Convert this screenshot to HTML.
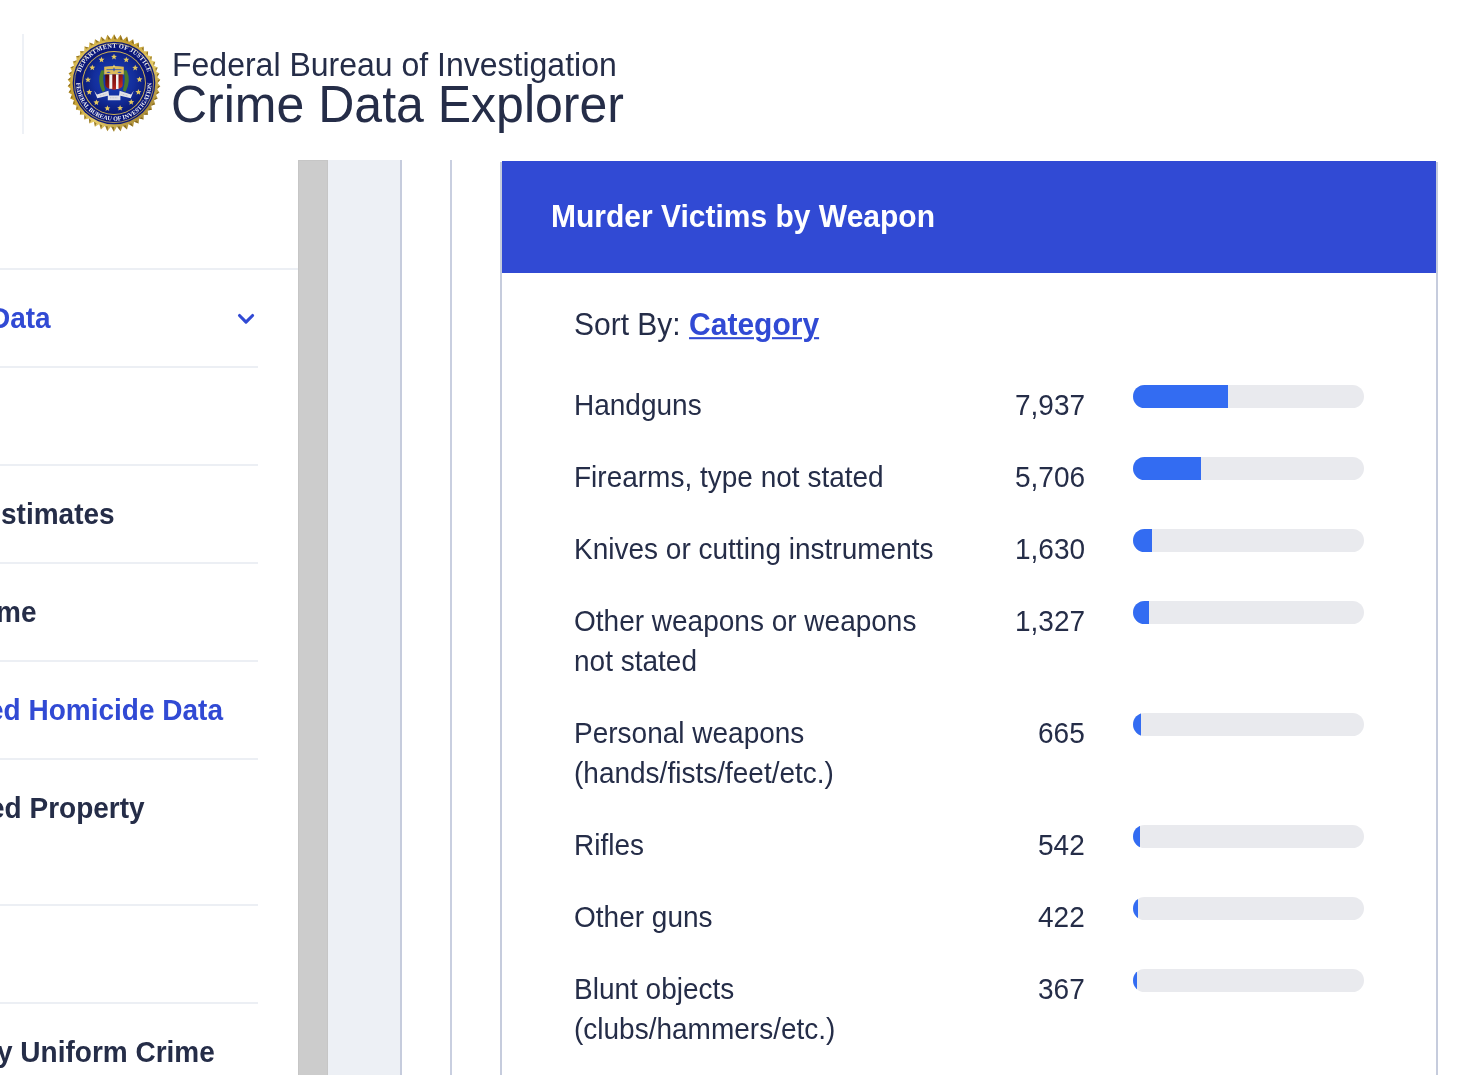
<!DOCTYPE html>
<html><head><meta charset="utf-8">
<style>
html,body{margin:0;padding:0;width:1483px;height:1075px;overflow:hidden;background:#fff;}
body{position:relative;font-family:"Liberation Sans",sans-serif;color:#252d48;}
.t,.lab,.num,.side,#seal{will-change:transform;}
.abs{position:absolute;}
.t{position:absolute;white-space:nowrap;line-height:40px;transform:scaleY(1.04);}
#vline0{left:22px;top:34px;width:2px;height:100px;background:#eef1f6;}
#seal{left:64px;top:33px;width:100px;height:100px;}
#fbi{left:172px;top:49px;font-size:32px;line-height:32px;transform-origin:0 27px;}
#cde{left:171px;top:80px;font-size:50px;line-height:50px;transform-origin:0 42px;}
/* sidebar */
.sl{position:absolute;left:0;height:2px;background:#eceff4;}
.side{position:absolute;font-weight:bold;font-size:28px;line-height:40px;white-space:nowrap;text-align:right;transform:scaleY(1.04);transform-origin:0 29px;}
#gray{left:298px;top:160px;width:28px;height:915px;background:#cccccc;border:1px solid #c6c6c6;border-bottom:none;}
#lightb{left:328px;top:160px;width:72px;height:915px;background:#edf0f5;}
#vl1{left:400px;top:160px;width:2px;height:915px;background:#c6ccdd;}
#vl2{left:450px;top:160px;width:2px;height:915px;background:#c9cfe0;}
#card{left:500px;top:162px;width:934px;height:940px;border-left:2px solid #c6ccdd;border-right:2px solid #c6ccdd;}
#chead{left:502px;top:161px;width:934px;height:112px;background:#314ad4;}
#ctitle{left:551px;top:197px;font-size:30px;font-weight:bold;color:#fff;line-height:40px;transform-origin:0 30px;}
.lab{position:absolute;left:574px;font-size:28px;line-height:40px;transform:scaleY(1.045);transform-origin:0 29px;}
.num{position:absolute;right:398px;font-size:28px;line-height:40px;text-align:right;transform:scaleY(1.045);transform-origin:0 29px;}
.trk{position:absolute;left:1133px;width:231px;height:23px;border-radius:12px;background:#e9eaee;overflow:hidden;}
.fill{position:absolute;left:0;top:0;height:23px;background:#336cf2;}
</style></head>
<body>
<div id="vline0" class="abs"></div>
<svg id="seal" class="abs" viewBox="0 0 100 100"><g transform="translate(2,2)">
<defs>
<linearGradient id="gold" x1="0" y1="0" x2="1" y2="1"><stop offset="0" stop-color="#f0da7c"/><stop offset="0.35" stop-color="#c09a2c"/><stop offset="0.6" stop-color="#e6cc6a"/><stop offset="1" stop-color="#86661a"/></linearGradient>
<radialGradient id="blu" cx="50%" cy="45%" r="55%"><stop offset="0" stop-color="#1c42bc"/><stop offset="0.6" stop-color="#132e9c"/><stop offset="1" stop-color="#0a1974"/></radialGradient>
<linearGradient id="red" x1="0" y1="0" x2="1" y2="1"><stop offset="0" stop-color="#4a0608"/><stop offset="0.6" stop-color="#9c1a18"/><stop offset="1" stop-color="#e03a22"/></linearGradient>
<path id="arcT" d="M 12.9 48 A 35.1 35.1 0 0 1 83.1 48"/>
<path id="arcB" d="M 10.4 48 A 37.6 37.6 0 0 0 85.6 48"/>
</defs>
<polygon points="45.02,4.50 48.00,-0.80 50.98,4.50 54.63,-0.22 56.87,5.31 61.03,1.48 62.60,6.92 67.06,4.13 68.06,9.29 72.59,7.56 73.14,12.38 77.61,11.60 77.76,16.14 82.09,16.16 81.82,20.48 85.98,21.19 85.25,25.35 89.22,26.64 87.99,30.63 91.72,32.46 89.98,36.24 93.43,38.56 91.19,42.06 94.29,44.83 91.60,48.00 94.29,51.17 91.19,53.94 93.43,57.44 89.98,59.76 91.72,63.54 87.99,65.37 89.22,69.36 85.25,70.65 85.98,74.81 81.82,75.52 82.09,79.84 77.76,79.86 77.61,84.40 73.14,83.62 72.59,88.44 68.06,86.71 67.06,91.87 62.60,89.08 61.03,94.52 56.87,90.69 54.63,96.22 50.98,91.50 48.00,96.80 45.02,91.50 41.37,96.22 39.13,90.69 34.97,94.52 33.40,89.08 28.94,91.87 27.94,86.71 23.41,88.44 22.86,83.62 18.39,84.40 18.24,79.86 13.91,79.84 14.18,75.52 10.02,74.81 10.75,70.65 6.78,69.36 8.01,65.37 4.28,63.54 6.02,59.76 2.57,57.44 4.81,53.94 1.71,51.17 4.40,48.00 1.71,44.83 4.81,42.06 2.57,38.56 6.02,36.24 4.28,32.46 8.01,30.63 6.78,26.64 10.75,25.35 10.02,21.19 14.18,20.48 13.91,16.16 18.24,16.14 18.39,11.60 22.86,12.38 23.41,7.56 27.94,9.29 28.94,4.13 33.40,6.92 34.97,1.48 39.13,5.31 41.37,-0.22" fill="url(#gold)"/>
<polygon points="48.00,-0.80 50.98,4.50 48.00,4.00" fill="#6a4c0a" opacity="0.6"/><polygon points="54.63,-0.22 56.87,5.31 53.99,4.41" fill="#6a4c0a" opacity="0.6"/><polygon points="61.03,1.48 62.60,6.92 59.87,5.63" fill="#6a4c0a" opacity="0.6"/><polygon points="67.06,4.13 68.06,9.29 65.53,7.64" fill="#6a4c0a" opacity="0.6"/><polygon points="72.59,7.56 73.14,12.38 70.86,10.41" fill="#6a4c0a" opacity="0.6"/><polygon points="77.61,11.60 77.76,16.14 75.77,13.87" fill="#6a4c0a" opacity="0.6"/><polygon points="82.09,16.16 81.82,20.48 80.16,17.97" fill="#6a4c0a" opacity="0.6"/><polygon points="85.98,21.19 85.25,25.35 83.95,22.63" fill="#6a4c0a" opacity="0.6"/><polygon points="89.22,26.64 87.99,30.63 87.07,27.76" fill="#6a4c0a" opacity="0.6"/><polygon points="91.72,32.46 89.98,36.24 89.46,33.27" fill="#6a4c0a" opacity="0.6"/><polygon points="93.43,38.56 91.19,42.06 91.08,39.05" fill="#6a4c0a" opacity="0.6"/><polygon points="94.29,44.83 91.60,48.00 91.90,45.00" fill="#6a4c0a" opacity="0.6"/><polygon points="94.29,51.17 91.19,53.94 91.90,51.00" fill="#6a4c0a" opacity="0.6"/><polygon points="93.43,57.44 89.98,59.76 91.08,56.95" fill="#6a4c0a" opacity="0.6"/><polygon points="91.72,63.54 87.99,65.37 89.46,62.73" fill="#6a4c0a" opacity="0.6"/><polygon points="89.22,69.36 85.25,70.65 87.07,68.24" fill="#6a4c0a" opacity="0.6"/><polygon points="85.98,74.81 81.82,75.52 83.95,73.37" fill="#6a4c0a" opacity="0.6"/><polygon points="82.09,79.84 77.76,79.86 80.16,78.03" fill="#6a4c0a" opacity="0.6"/><polygon points="77.61,84.40 73.14,83.62 75.77,82.13" fill="#6a4c0a" opacity="0.6"/><polygon points="72.59,88.44 68.06,86.71 70.86,85.59" fill="#6a4c0a" opacity="0.6"/><polygon points="67.06,91.87 62.60,89.08 65.53,88.36" fill="#6a4c0a" opacity="0.6"/><polygon points="61.03,94.52 56.87,90.69 59.87,90.37" fill="#6a4c0a" opacity="0.6"/><polygon points="54.63,96.22 50.98,91.50 53.99,91.59" fill="#6a4c0a" opacity="0.6"/><polygon points="48.00,96.80 45.02,91.50 48.00,92.00" fill="#6a4c0a" opacity="0.6"/><polygon points="41.37,96.22 39.13,90.69 42.01,91.59" fill="#6a4c0a" opacity="0.6"/><polygon points="34.97,94.52 33.40,89.08 36.13,90.37" fill="#6a4c0a" opacity="0.6"/><polygon points="28.94,91.87 27.94,86.71 30.47,88.36" fill="#6a4c0a" opacity="0.6"/><polygon points="23.41,88.44 22.86,83.62 25.14,85.59" fill="#6a4c0a" opacity="0.6"/><polygon points="18.39,84.40 18.24,79.86 20.23,82.13" fill="#6a4c0a" opacity="0.6"/><polygon points="13.91,79.84 14.18,75.52 15.84,78.03" fill="#6a4c0a" opacity="0.6"/><polygon points="10.02,74.81 10.75,70.65 12.05,73.37" fill="#6a4c0a" opacity="0.6"/><polygon points="6.78,69.36 8.01,65.37 8.93,68.24" fill="#6a4c0a" opacity="0.6"/><polygon points="4.28,63.54 6.02,59.76 6.54,62.73" fill="#6a4c0a" opacity="0.6"/><polygon points="2.57,57.44 4.81,53.94 4.92,56.95" fill="#6a4c0a" opacity="0.6"/><polygon points="1.71,51.17 4.40,48.00 4.10,51.00" fill="#6a4c0a" opacity="0.6"/><polygon points="1.71,44.83 4.81,42.06 4.10,45.00" fill="#6a4c0a" opacity="0.6"/><polygon points="2.57,38.56 6.02,36.24 4.92,39.05" fill="#6a4c0a" opacity="0.6"/><polygon points="4.28,32.46 8.01,30.63 6.54,33.27" fill="#6a4c0a" opacity="0.6"/><polygon points="6.78,26.64 10.75,25.35 8.93,27.76" fill="#6a4c0a" opacity="0.6"/><polygon points="10.02,21.19 14.18,20.48 12.05,22.63" fill="#6a4c0a" opacity="0.6"/><polygon points="13.91,16.16 18.24,16.14 15.84,17.97" fill="#6a4c0a" opacity="0.6"/><polygon points="18.39,11.60 22.86,12.38 20.23,13.87" fill="#6a4c0a" opacity="0.6"/><polygon points="23.41,7.56 27.94,9.29 25.14,10.41" fill="#6a4c0a" opacity="0.6"/><polygon points="28.94,4.13 33.40,6.92 30.47,7.64" fill="#6a4c0a" opacity="0.6"/><polygon points="34.97,1.48 39.13,5.31 36.13,5.63" fill="#6a4c0a" opacity="0.6"/><polygon points="41.37,-0.22 45.02,4.50 42.01,4.41" fill="#6a4c0a" opacity="0.6"/>
<circle cx="48" cy="48" r="42.8" fill="url(#gold)"/>
<circle cx="48" cy="48" r="41.3" fill="#0a177a"/>
<circle cx="48" cy="48" r="39.6" fill="none" stroke="#d9bd5c" stroke-width="0.7"/>
<circle cx="48" cy="48" r="31.9" fill="#d6b854"/>
<circle cx="48" cy="48" r="31" fill="url(#blu)"/>
<text font-family="Liberation Serif" font-weight="bold" font-size="6.4" fill="#f4f4f4" letter-spacing="0.25"><textPath href="#arcT" startOffset="50%" text-anchor="middle">DEPARTMENT OF JUSTICE</textPath></text>
<text font-family="Liberation Serif" font-weight="bold" font-size="6.1" fill="#f4f4f4" letter-spacing="0.05"><textPath href="#arcB" startOffset="50%" text-anchor="middle">FEDERAL BUREAU OF INVESTIGATION</textPath></text>
<polygon points="48.00,18.80 48.82,20.77 50.95,20.94 49.33,22.33 49.82,24.41 48.00,23.29 46.18,24.41 46.67,22.33 45.05,20.94 47.18,20.77" fill="#e6c95e"/><polygon points="35.50,21.70 36.32,23.67 38.45,23.84 36.83,25.23 37.32,27.31 35.50,26.20 33.68,27.31 34.17,25.23 32.55,23.84 34.68,23.67" fill="#e6c95e"/><polygon points="60.30,21.70 61.12,23.67 63.25,23.84 61.63,25.23 62.12,27.31 60.30,26.20 58.48,27.31 58.97,25.23 57.35,23.84 59.48,23.67" fill="#e6c95e"/><polygon points="26.30,29.60 27.12,31.57 29.25,31.74 27.63,33.13 28.12,35.21 26.30,34.10 24.48,35.21 24.97,33.13 23.35,31.74 25.48,31.57" fill="#e6c95e"/><polygon points="69.20,29.80 70.02,31.77 72.15,31.94 70.53,33.33 71.02,35.41 69.20,34.30 67.38,35.41 67.87,33.33 66.25,31.94 68.38,31.77" fill="#e6c95e"/><polygon points="22.00,41.70 22.82,43.67 24.95,43.84 23.33,45.23 23.82,47.31 22.00,46.20 20.18,47.31 20.67,45.23 19.05,43.84 21.18,43.67" fill="#e6c95e"/><polygon points="73.50,41.40 74.32,43.37 76.45,43.54 74.83,44.93 75.32,47.01 73.50,45.90 71.68,47.01 72.17,44.93 70.55,43.54 72.68,43.37" fill="#e6c95e"/><polygon points="23.30,54.10 24.12,56.07 26.25,56.24 24.63,57.63 25.12,59.71 23.30,58.60 21.48,59.71 21.97,57.63 20.35,56.24 22.48,56.07" fill="#e6c95e"/><polygon points="72.40,54.10 73.22,56.07 75.35,56.24 73.73,57.63 74.22,59.71 72.40,58.60 70.58,59.71 71.07,57.63 69.45,56.24 71.58,56.07" fill="#e6c95e"/><polygon points="30.40,64.40 31.22,66.37 33.35,66.54 31.73,67.93 32.22,70.01 30.40,68.89 28.58,70.01 29.07,67.93 27.45,66.54 29.58,66.37" fill="#e6c95e"/><polygon points="65.20,64.10 66.02,66.07 68.15,66.24 66.53,67.63 67.02,69.71 65.20,68.59 63.38,69.71 63.87,67.63 62.25,66.24 64.38,66.07" fill="#e6c95e"/><polygon points="41.40,70.30 42.22,72.27 44.35,72.44 42.73,73.83 43.22,75.91 41.40,74.80 39.58,75.91 40.07,73.83 38.45,72.44 40.58,72.27" fill="#e6c95e"/><polygon points="54.10,70.00 54.92,71.97 57.05,72.14 55.43,73.53 55.92,75.61 54.10,74.49 52.28,75.61 52.77,73.53 51.15,72.14 53.28,71.97" fill="#e6c95e"/>
<path d="M35.2 35.4 q-4.6 10.5 1.2 21.4 q2.2 -0.2 2.8 -1.6 q-3.6 -9.5 -0.6 -19.6 q-1.6 -0.6 -3.4 -0.2 z" fill="#4a7a2e"/>
<path d="M60.8 35.4 q4.6 10.5 -1.2 21.4 q-2.2 -0.2 -2.8 -1.6 q3.6 -9.5 0.6 -19.6 q1.6 -0.6 3.4 -0.2 z" fill="#4a7a2e"/>
<path d="M38.2 31.8 q9.8 -1.5 19.6 0 v7.6 h-19.6 z" fill="#dcbc5a"/>
<path d="M48 29.4 l1.3 2.6 h-2.6 z" fill="#eed372"/>
<path d="M40.5 34.6 h15" stroke="#3050b8" stroke-width="0.8"/><ellipse cx="42.5" cy="37.3" rx="2" ry="0.6" fill="#3050b8"/><ellipse cx="53.5" cy="37.3" rx="2" ry="0.6" fill="#3050b8"/><path d="M48 32.3 l1 2.2 l-1 2.2 l-1 -2.2 z" fill="#3050b8"/>
<path d="M39.3 39.4 h17.4 v10.5 q0 3.6 -8.7 4.9 q-8.7 -1.3 -8.7 -4.9 z" fill="url(#red)"/>
<rect x="43.3" y="39.4" width="3" height="14.4" fill="#f2f2f2"/>
<rect x="50" y="39.4" width="2.5" height="14.6" fill="#f2f2f2"/>
<path d="M28.2 55.8 L31 59.5 L42.4 55.8 L43.1 60.4 L53 60.4 L53.6 55.8 L65 59.5 L67.7 55.8 L64.8 63.3 L54.4 60.8 L54.4 65.2 L41.8 65.2 L41.8 60.8 L31.3 63.3 Z" fill="#e2e2e8"/><path d="M34 60.8 L40.5 58.8 M55.5 58.8 L62 60.8 M44 62.8 h8" stroke="#b4b4c0" stroke-width="0.8" stroke-dasharray="1 0.6"/>
</g></svg>
<div id="fbi" class="t">Federal Bureau of Investigation</div>
<div id="cde" class="t">Crime Data Explorer</div>

<!-- sidebar -->
<div class="sl" style="top:268px;width:298px"></div>
<div class="sl" style="top:366px;width:258px"></div>
<div class="sl" style="top:464px;width:258px"></div>
<div class="sl" style="top:562px;width:258px"></div>
<div class="sl" style="top:660px;width:258px"></div>
<div class="sl" style="top:758px;width:258px"></div>
<div class="sl" style="top:904px;width:258px"></div>
<div class="sl" style="top:1002px;width:258px"></div>

<div class="side" style="right:1432px;top:299px;color:#314ad4">Data</div>
<div class="side" style="right:1368px;top:495px">stimates</div>
<div class="side" style="right:1447px;top:593px">me</div>
<div class="side" style="right:1260px;top:691px;color:#314ad4">ed Homicide Data</div>
<div class="side" style="right:1338px;top:789px">ed Property</div>
<div class="side" style="right:1268px;top:1033px">y Uniform Crime</div>
<svg class="abs" style="left:236px;top:312px" width="20" height="14" viewBox="0 0 20 14"><path d="M3.5 3.5 L10 10.2 L16.6 3.5" fill="none" stroke="#314ad4" stroke-width="3.1" stroke-linecap="round" stroke-linejoin="round"/></svg>

<div id="gray" class="abs"></div>
<div id="lightb" class="abs"></div>
<div id="vl1" class="abs"></div>
<div id="vl2" class="abs"></div>

<div id="card" class="abs"></div>
<div id="chead" class="abs"></div>
<div id="ctitle" class="t">Murder Victims by Weapon</div>

<div class="lab" style="top:305px;font-size:30px">Sort By: <b style="color:#314ad4;text-decoration:underline;text-decoration-thickness:2px;text-underline-offset:2px;">Category</b></div>

<div class="lab" style="top:386px">Handguns</div>
<div class="num" style="top:386px">7,937</div>
<div class="trk" style="top:385px"><div class="fill" style="width:95px"></div></div>

<div class="lab" style="top:458px">Firearms, type not stated</div>
<div class="num" style="top:458px">5,706</div>
<div class="trk" style="top:457px"><div class="fill" style="width:68px"></div></div>

<div class="lab" style="top:530px">Knives or cutting instruments</div>
<div class="num" style="top:530px">1,630</div>
<div class="trk" style="top:529px"><div class="fill" style="width:19px"></div></div>

<div class="lab" style="top:602px">Other weapons or weapons</div>
<div class="lab" style="top:642px">not stated</div>
<div class="num" style="top:602px">1,327</div>
<div class="trk" style="top:601px"><div class="fill" style="width:16px"></div></div>

<div class="lab" style="top:714px">Personal weapons</div>
<div class="lab" style="top:754px">(hands/fists/feet/etc.)</div>
<div class="num" style="top:714px">665</div>
<div class="trk" style="top:713px"><div class="fill" style="width:8px"></div></div>

<div class="lab" style="top:826px">Rifles</div>
<div class="num" style="top:826px">542</div>
<div class="trk" style="top:825px"><div class="fill" style="width:6.5px"></div></div>

<div class="lab" style="top:898px">Other guns</div>
<div class="num" style="top:898px">422</div>
<div class="trk" style="top:897px"><div class="fill" style="width:5px"></div></div>

<div class="lab" style="top:970px">Blunt objects</div>
<div class="lab" style="top:1010px">(clubs/hammers/etc.)</div>
<div class="num" style="top:970px">367</div>
<div class="trk" style="top:969px"><div class="fill" style="width:4.4px"></div></div>

</body></html>
